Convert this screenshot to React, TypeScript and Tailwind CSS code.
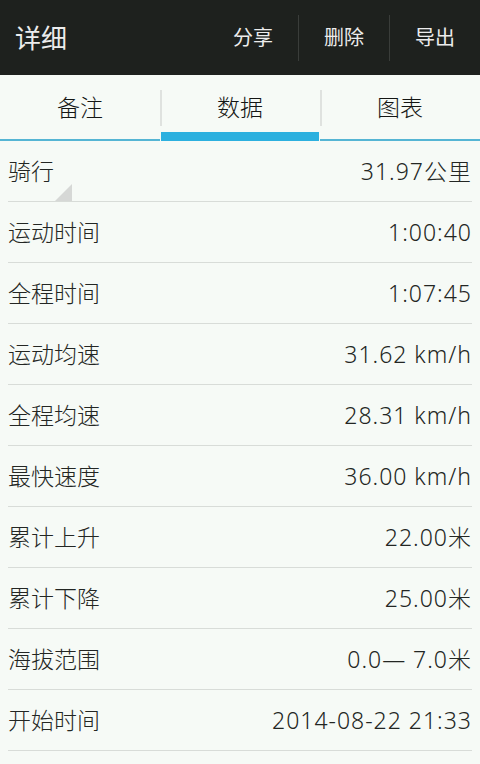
const ROWS: { label: string; value: string }[] = [
  { label: "骑行", value: "31.97公里" },
  { label: "运动时间", value: "1:00:40" },
  { label: "全程时间", value: "1:07:45" },
  { label: "运动均速", value: "31.62 km/h" },
  { label: "全程均速", value: "28.31 km/h" },
  { label: "最快速度", value: "36.00 km/h" },
  { label: "累计上升", value: "22.00米" },
  { label: "累计下降", value: "25.00米" },
  { label: "海拔范围", value: "0.0— 7.0米" },
  { label: "开始时间", value: "2014-08-22 21:33" },
];

const TABS = ["备注", "数据", "图表"];
const ACTIONS = ["分享", "删除", "导出"];

export default function App() {
  return (
    <div
      className="flex h-[764px] w-[480px] flex-col overflow-hidden bg-[#f6faf6] font-light text-[#232623]"
      style={{ fontFamily: '"Noto Sans", "Noto Sans CJK SC", sans-serif' }}
    >
      {/* Action bar */}
      <header className="flex h-[75px] shrink-0 items-center bg-[#1e211e] font-normal">
        <h1 className="flex-1 pl-[15px] text-[26px] leading-none text-[#ececec]">详细</h1>
        {ACTIONS.map((a, i) => (
          <div key={a} className="flex h-full items-center">
            {i > 0 && <span className="h-[46px] w-px bg-[#3a3d3a]" />}
            <button className="flex h-full w-[90px] items-center justify-center text-[20px] leading-none text-[#ececec]">
              {a}
            </button>
          </div>
        ))}
      </header>

      {/* Tabs */}
      <nav className="flex h-[66px] shrink-0 items-stretch text-[#141614]">
        {TABS.map((t, i) => {
          const active = i === 1;
          return (
            <div key={t} className="relative flex flex-1 flex-col">
              {i > 0 && (
                <span className="absolute left-0 top-[15px] h-[36px] w-[2px] bg-[#dfe2df]" />
              )}
              <div className="flex flex-1 items-center justify-center pt-[8px] text-[23px] leading-none">
                {t}
              </div>
              <div className="flex h-[10px] items-end">
                <div
                  className={
                    active
                      ? "mx-px h-[9px] w-full bg-[#2cb0df]"
                      : "h-[2px] w-full bg-[#55b5d4]"
                  }
                />
              </div>
            </div>
          );
        })}
      </nav>

      {/* Stats list */}
      <ul className="flex flex-col">
        {ROWS.map((r, i) => (
          <li
            key={r.label}
            className="relative mx-2 flex h-[61px] shrink-0 items-center justify-between border-b border-[#d8dcd8] text-[23px] leading-none"
          >
            <span>{r.label}</span>
            <span className="tracking-[1px]">{r.value}</span>
            {i === 0 && (
              <span className="absolute bottom-0 left-[47px] h-0 w-0 border-b-[17px] border-l-[17px] border-b-[#d6d8d6] border-l-transparent" />
            )}
          </li>
        ))}
      </ul>
    </div>
  );
}
